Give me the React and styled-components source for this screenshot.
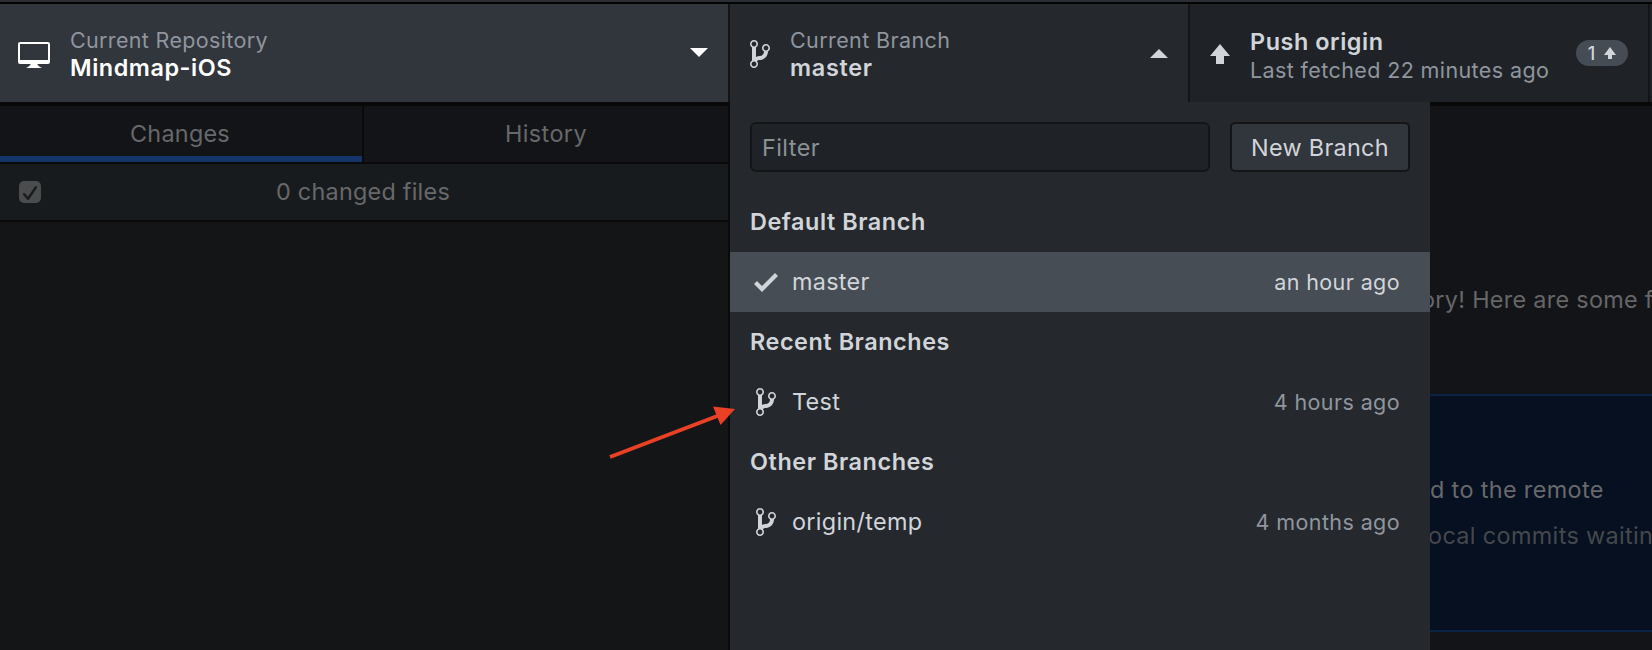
import React from "react";
import styled, { createGlobalStyle } from "styled-components";

const GlobalStyle = createGlobalStyle`
  * { box-sizing: border-box; }
  body {
    margin: 0;
    background: #131417;
    font-family: Inter, "Liberation Sans", sans-serif;
  }
`;

const Window = styled.div`
  position: relative;
  display: flex;
  flex-direction: column;
  width: 1652px;
  height: 650px;
  overflow: hidden;
  font-size: 23.4px;
  letter-spacing: 0.3px;
  white-space: nowrap;
`;

const TitleStrip = styled.div`
  flex: none;
  height: 4px;
  background: #2b2e35;
  border-bottom: 2px solid #030304;
`;

const Toolbar = styled.div`
  flex: none;
  display: flex;
  height: 98px;
  background: #1f2327;
`;

const ToolbarButton = styled.div`
  position: relative;
  flex: none;
  display: flex;
  align-items: center;
  width: ${(p) => p.$width}px;
  padding: 0 20px 0 ${(p) => p.$padLeft || 20}px;
  background: ${(p) => p.$bg};
  border-right: 2px solid #131416;
`;

const ToolbarIcon = styled.div`
  flex: none;
  padding-top: 2px;
`;

const ButtonText = styled.div`
  flex: 1;
  margin-left: 20px;
  margin-top: ${(p) => p.$drop || 3}px;
`;

const Label = styled.div`
  font-size: 21.5px;
  line-height: ${(p) => p.$lineHeight || 27}px;
  letter-spacing: ${(p) => p.$track || 0.39}px;
  color: #8f969e;
`;

const Title = styled.div`
  font-weight: 600;
  line-height: 28px;
  letter-spacing: ${(p) => p.$track || 0.56}px;
  color: ${(p) => p.$color || "#d1d5da"};
`;

const Badge = styled.div`
  display: flex;
  align-items: center;
  justify-content: center;
  gap: 9px;
  width: 52px;
  height: 26px;
  border-radius: 13px;
  background: #454c54;
  color: #d1d5da;
  font-size: 18px;
  font-weight: 500;
  letter-spacing: 0;
`;

const Svg = styled.svg`
  display: block;
  flex: none;
  fill: ${(p) => p.$color || "#d1d5da"};
`;

const Body = styled.div`
  flex: 1;
  display: flex;
  min-height: 0;
  border-top: 4px solid #09090a;
`;

const Sidebar = styled.div`
  flex: none;
  width: 730px;
  background: #141517;
  border-right: 2px solid #0a0a0b;
`;

const Tabs = styled.div`
  display: flex;
  height: 58px;
  background: #131418;
  border-bottom: 2px solid #0a0a0b;
`;

const Tab = styled.div`
  width: 364px;
  line-height: 56px;
  padding-right: ${(p) => (p.$active ? 2 : 0)}px;
  text-align: center;
  color: #67686a;
  border-right: ${(p) => (p.$active ? "2px solid #0a0a0b" : "none")};
  box-shadow: ${(p) => (p.$active ? "inset 0 -6px #15346a" : "none")};
  letter-spacing: ${(p) => p.$track}px;
`;

const ChangesHeader = styled.div`
  display: flex;
  align-items: center;
  height: 58px;
  padding-left: 19px;
  background: #181b1e;
  border-bottom: 2px solid #0a0a0b;
`;

const Checkbox = styled.div`
  flex: none;
  width: 22px;
  height: 22px;
  border-radius: 5px;
  background: #4b4c4e;
`;

const ChangedCount = styled.div`
  flex: 1;
  padding: 0 43px 2px 0;
  text-align: center;
  color: #67686a;
  letter-spacing: 0.24px;
`;

const Main = styled.div`
  flex: 1;
  min-width: 0;
  padding-top: 176px;
  background: #131417;
  overflow: hidden;
`;

const Intro = styled.div`
  padding-left: 691px;
  line-height: 36px;
  color: #656668;
`;

const Suggestion = styled.div`
  display: flex;
  flex-direction: column;
  gap: 10px;
  height: 238px;
  margin-top: 76px;
  padding-top: 76px;
  background: #061021;
  border-top: 2px solid #0b2347;
  border-bottom: 2px solid #0b2347;
`;

const SuggestionLine = styled.div`
  padding-left: ${(p) => p.$indent}px;
  line-height: 36px;
  letter-spacing: 0.36px;
  color: ${(p) => p.$color};
`;

const BranchMenu = styled.div`
  position: absolute;
  top: 102px;
  left: 730px;
  width: 700px;
  height: 548px;
  padding-top: 20px;
  background: #25292d;
`;

const FilterRow = styled.div`
  display: flex;
  gap: 20px;
  padding: 0 20px;
  margin-bottom: 20px;
`;

const FilterInput = styled.div`
  flex: 1;
  height: 50px;
  padding-left: 10px;
  line-height: 48px;
  border: 2px solid #141517;
  border-radius: 6px;
  background: #1f2327;
  color: #8a9197;
  letter-spacing: 0.45px;
`;

const NewBranchButton = styled.div`
  width: 180px;
  height: 50px;
  line-height: 48px;
  text-align: center;
  border: 2px solid #141517;
  border-radius: 5px;
  background: #31353c;
  color: #d1d5da;
`;

const GroupHeader = styled.div`
  height: 60px;
  padding-left: 20px;
  line-height: 60px;
  font-weight: 600;
  letter-spacing: 0.56px;
  color: #d1d5da;
`;

const BranchRow = styled.div`
  display: flex;
  align-items: center;
  height: 60px;
  padding: 0 30px 0 24px;
  background: ${(p) => (p.$selected ? "#464d54" : "transparent")};
  color: #d1d5da;
`;

const IconSlot = styled.div`
  flex: none;
  display: flex;
  justify-content: center;
  width: 24px;
  margin-right: 14px;
`;

const BranchName = styled.div`
  flex: 1;
  padding-bottom: 2px;
`;

const BranchAge = styled.div`
  font-size: 21.5px;
  letter-spacing: 0.4px;
  color: ${(p) => (p.$selected ? "#d1d5da" : "#8f969e")};
`;

const ArrowOverlay = styled.svg`
  position: absolute;
  left: 600px;
  top: 400px;
`;

const PATHS = {
  desktop:
    "M15 2H1c-.55 0-1 .45-1 1v9c0 .55.45 1 1 1h5.34c-.25.61-.86 1.39-2.34 2h8c-1.48-.61-2.09-1.39-2.34-2H15c.55 0 1-.45 1-1V3c0-.55-.45-1-1-1zm0 9H1V3h14v8z",
  branch:
    "M10 5c0-1.11-.89-2-2-2a1.993 1.993 0 0 0-1 3.72v.3c-.02.52-.23.98-.63 1.38-.4.4-.86.61-1.38.63-.83.02-1.48.16-2 .45V4.72a1.993 1.993 0 0 0-1-3.72C.88 1 0 1.89 0 3a2 2 0 0 0 1 1.72v6.56c-.59.35-1 .99-1 1.72 0 1.11.89 2 2 2 1.11 0 2-.89 2-2 0-.53-.2-1-.53-1.36.09-.06.48-.41.59-.47.25-.11.56-.17.94-.17 1.05-.05 1.95-.45 2.75-1.25S8.95 7.77 9 6.73h-.02C9.59 6.37 10 5.73 10 5zM2 1.8c.66 0 1.2.55 1.2 1.2 0 .65-.55 1.2-1.2 1.2C1.35 4.2.8 3.65.8 3c0-.65.55-1.2 1.2-1.2zm0 12.41c-.66 0-1.2-.55-1.2-1.2 0-.65.55-1.2 1.2-1.2.65 0 1.2.55 1.2 1.2 0 .65-.55 1.2-1.2 1.2zm6-8c-.66 0-1.2-.55-1.2-1.2 0-.65.55-1.2 1.2-1.2.65 0 1.2.55 1.2 1.2 0 .65-.55 1.2-1.2 1.2z",
  check: "M12 5l-8 8-4-4 1.5-1.5L4 10l6.5-6.5L12 5z",
  arrowUp: "M5 3L0 9h3v4h4V9h3L5 3z",
};

function Icon({ name, cols, color }) {
  return (
    <Svg width={cols * 2} height="32" viewBox={`0 0 ${cols} 16`} $color={color}>
      <path d={PATHS[name]} />
    </Svg>
  );
}

function Caret({ up }) {
  return (
    <Svg width="18" height="10" viewBox="0 0 18 10" $color={up ? "#d1d5da" : "#ffffff"}>
      <path d={up ? "M0 10L9 1l9 9z" : "M0 0l9 9 9-9z"} />
    </Svg>
  );
}

const groups = [
  { title: "Default Branch", branch: "master", age: "an hour ago", selected: true },
  { title: "Recent Branches", branch: "Test", age: "4 hours ago" },
  { title: "Other Branches", branch: "origin/temp", age: "4 months ago" },
];

export default function App() {
  return (
    <Window>
      <GlobalStyle />
      <TitleStrip />
      <Toolbar>
        <ToolbarButton $width={730} $padLeft={18} $bg="#31353c">
          <ToolbarIcon>
            <Icon name="desktop" cols={16} color="#ffffff" />
          </ToolbarIcon>
          <ButtonText>
            <Label $track={0.34}>Current Repository</Label>
            <Title $color="#ffffff">Mindmap-iOS</Title>
          </ButtonText>
          <Caret />
        </ToolbarButton>
        <ToolbarButton $width={460} $bg="#25292d">
          <ToolbarIcon>
            <Icon name="branch" cols={10} />
          </ToolbarIcon>
          <ButtonText>
            <Label>Current Branch</Label>
            <Title $track={0.7}>master</Title>
          </ButtonText>
          <Caret up />
        </ToolbarButton>
        <ToolbarButton $width={460} $bg="#1f2327">
          <ToolbarIcon>
            <Icon name="arrowUp" cols={10} />
          </ToolbarIcon>
          <ButtonText $drop={6}>
            <Title>Push origin</Title>
            <Label $lineHeight={29}>Last fetched 22 minutes ago</Label>
          </ButtonText>
          <Badge>
            1
            <Svg width="12" height="12" viewBox="0 0 6 6">
              <path d="M3 0L0 4h2v2h2V4h2z" />
            </Svg>
          </Badge>
        </ToolbarButton>
      </Toolbar>
      <Body>
        <Sidebar>
          <Tabs>
            <Tab $active $track={0.24}>Changes</Tab>
            <Tab $track={0.4}>History</Tab>
          </Tabs>
          <ChangesHeader>
            <Checkbox>
              <svg width="22" height="22" viewBox="0 0 22 22" fill="none">
                <path d="M5.2 12.2l3.9 4.6 7.7-11.4" stroke="#191b1d" strokeWidth="2.5" strokeLinecap="round" strokeLinejoin="round" />
              </svg>
            </Checkbox>
            <ChangedCount>0 changed files</ChangedCount>
          </ChangesHeader>
        </Sidebar>
        <Main>
          <Intro>ory! Here are some f</Intro>
          <Suggestion>
            <SuggestionLine $indent={700} $color="#67696c">d to the remote</SuggestionLine>
            <SuggestionLine $indent={698} $color="#45484c">ocal commits waitin</SuggestionLine>
          </Suggestion>
        </Main>
      </Body>
      <BranchMenu>
        <FilterRow>
          <FilterInput>Filter</FilterInput>
          <NewBranchButton>New Branch</NewBranchButton>
        </FilterRow>
        {groups.map((g) => (
          <React.Fragment key={g.title}>
            <GroupHeader>{g.title}</GroupHeader>
            <BranchRow $selected={g.selected}>
              <IconSlot>
                <Icon name={g.selected ? "check" : "branch"} cols={g.selected ? 12 : 10} />
              </IconSlot>
              <BranchName>{g.branch}</BranchName>
              <BranchAge $selected={g.selected}>{g.age}</BranchAge>
            </BranchRow>
          </React.Fragment>
        ))}
      </BranchMenu>
      <ArrowOverlay width="140" height="64" viewBox="0 0 140 64">
        <path d="M10 57L120 15" stroke="#ea4025" strokeWidth="4" fill="none" />
        <path d="M135 9L113 6.5L120.5 25z" fill="#ea4025" />
      </ArrowOverlay>
    </Window>
  );
}
